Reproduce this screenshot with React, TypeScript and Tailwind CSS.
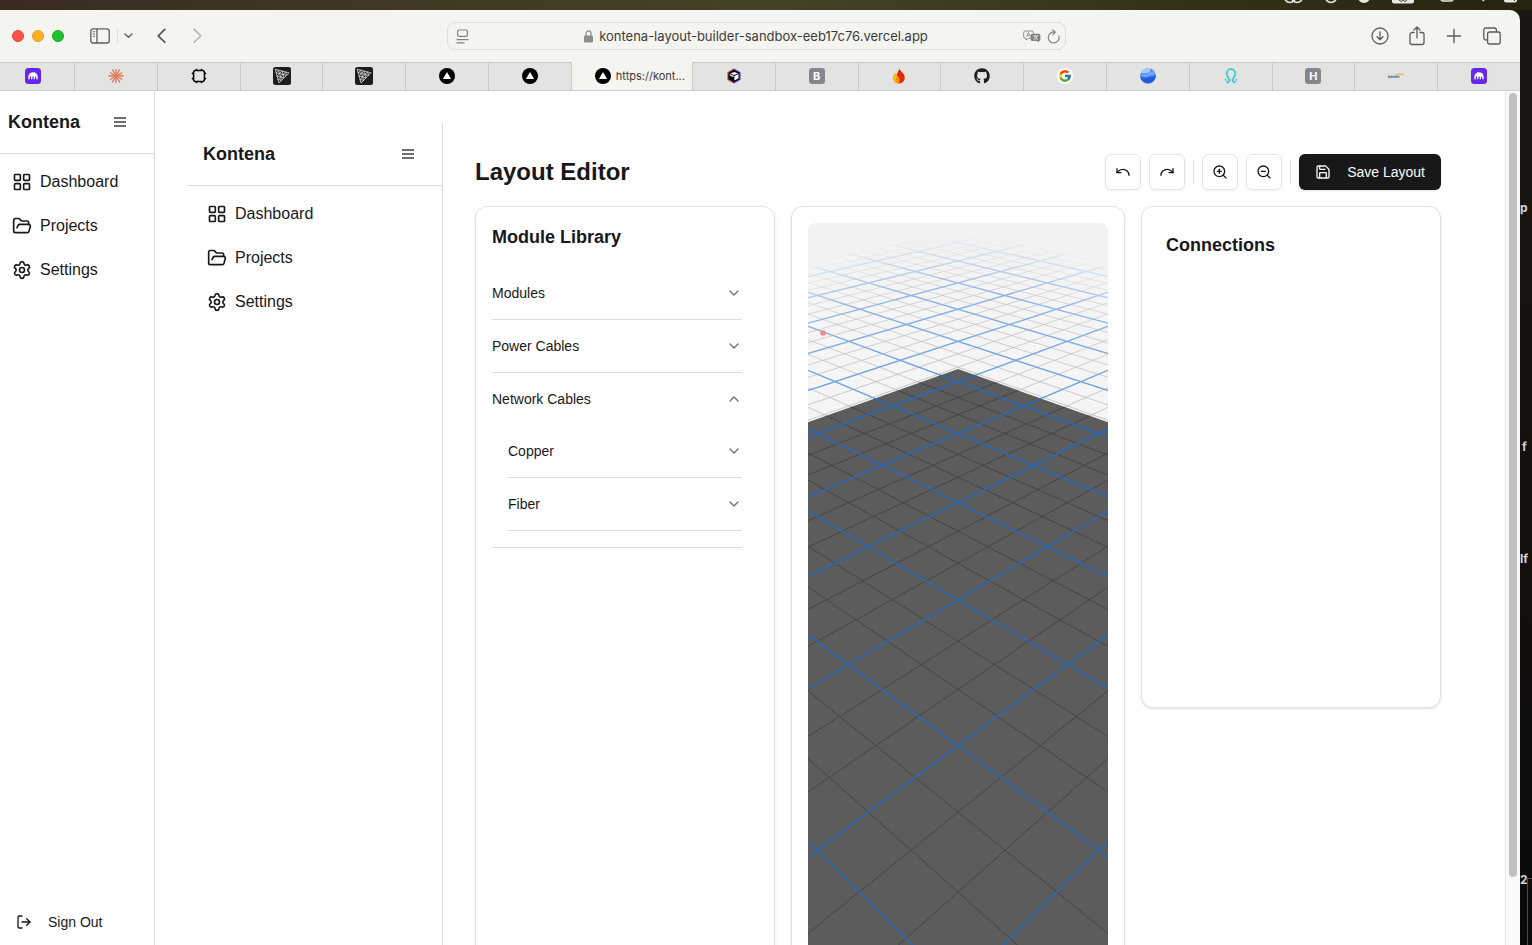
import React, { useState } from "react";
import {
  ChevronDown,
  FolderOpen,
  LayoutGrid,
  LogOut,
  Redo,
  Save,
  Settings,
  Undo,
  ZoomIn,
  ZoomOut,
} from "lucide-react";
import { FaGithub } from "react-icons/fa";
import { FcGoogle } from "react-icons/fc";

/* ---------- Desktop behind the window ---------- */

function MenuBar() {
  return (
    <div className="h-[10px] overflow-hidden bg-gradient-to-r from-[#3a2d20] via-[#454328] to-[#26240f]">
      <svg className="ml-auto block h-[10px] w-[260px]" viewBox="0 0 260 10" aria-hidden="true">
        <g fill="none" stroke="#e8e8e2" strokeWidth="1.5">
          <circle cx="18" cy="-3" r="5.5" />
          <circle cx="25" cy="-3" r="5.5" />
          <circle cx="59" cy="-3" r="5.5" />
          <rect x="169" y="-6" width="12" height="7" rx="2" />
          <path d="M209 -2l3 3" />
        </g>
        <circle cx="92" cy="-3" r="6" fill="#e8e8e2" />
        <rect x="120" y="-6" width="22" height="9.500" rx="2" fill="#e8e8e2" />
        <path d="M127 0l2 1.500 2-1.500 2 1.500 2-1.500" fill="none" stroke="#26240f" strokeWidth="0.8" />
        <rect x="232" y="-6" width="13" height="8.500" rx="2" fill="#e8e8e2" />
        <path d="M240 -2l3 3" stroke="#26240f" />
      </svg>
    </div>
  );
}

function DesktopEdge() {
  return (
    <div className="relative w-3 shrink-0 overflow-hidden bg-gradient-to-b from-[#1a1712] via-[#15100d] to-[#0a0a0a] font-['Inter',sans-serif] text-xs leading-4 font-bold text-[#d4d4d4]">
      <span className="absolute top-[190px] left-0">p</span>
      <span className="absolute top-[429px] left-0.5">f</span>
      <span className="absolute top-[541px] left-0">lf</span>
      <span className="absolute top-[862px] left-0">2</span>
      <div className="absolute top-[868px] right-0 h-20 w-[5px] border-t border-l border-[#4a4a4a]" />
    </div>
  );
}

/* ---------- Browser toolbar ---------- */

function ToolButton({ label, children, className = "" }: { label: string; children: React.ReactNode; className?: string }) {
  return (
    <button type="button" aria-label={label} className={`flex shrink-0 items-center justify-center ${className}`}>
      {children}
    </button>
  );
}

function Toolbar() {
  return (
    <div className="flex h-[52px] items-center bg-[#f4f4f0] text-[#5c5c5a]">
      <div className="flex w-[447px] shrink-0 items-center pl-3">
        <div className="flex gap-2">
          <button type="button" aria-label="Close" className="size-3 rounded-full border border-[#e0443e] bg-[#fb5149]" />
          <button type="button" aria-label="Minimize" className="size-3 rounded-full border border-[#dfa023] bg-[#fdb022]" />
          <button type="button" aria-label="Zoom" className="size-3 rounded-full border border-[#14a627] bg-[#1cc52f]" />
        </div>
        <ToolButton label="Sidebar" className="ml-[25px] w-[21px]">
          <svg width="20" height="16" viewBox="0 0 20 16" fill="none" stroke="currentColor" strokeWidth="1.3">
            <rect x="0.8" y="0.8" width="18.4" height="14.2" rx="2.2" />
            <path d="M7 1v14" />
            <path d="M2.7 3.7h2.4M2.7 6h2.4M2.7 8.3h2.4" strokeWidth="0.9" />
          </svg>
        </ToolButton>
        <div className="ml-[7px] h-4 w-px bg-[#e2e2de]" />
        <ToolButton label="Tab groups" className="ml-1.5 w-[9px]">
          <svg width="9" height="6" viewBox="0 0 9 6" fill="none" stroke="currentColor" strokeWidth="1.4" strokeLinecap="round" strokeLinejoin="round">
            <path d="M1 1l3.5 3.2L8 1" />
          </svg>
        </ToolButton>
        <ToolButton label="Back" className="ml-6 w-[9px]">
          <svg width="9" height="16" viewBox="0 0 9 16" fill="none" stroke="currentColor" strokeWidth="1.8" strokeLinecap="round" strokeLinejoin="round">
            <path d="M7.8 1.4L1.2 7.8l6.6 6.4" />
          </svg>
        </ToolButton>
        <ToolButton label="Forward" className="ml-[27px] w-[9px] text-[#b3b3b0]">
          <svg width="9" height="16" viewBox="0 0 9 16" fill="none" stroke="currentColor" strokeWidth="1.6" strokeLinecap="round" strokeLinejoin="round">
            <path d="M1.2 1.4l6.6 6.4-6.6 6.4" />
          </svg>
        </ToolButton>
      </div>
      <div className="flex h-7 min-w-0 flex-1 items-center rounded-lg border border-[#dededa] pr-[5px] pl-2">
        <svg width="13" height="15" viewBox="0 0 13 15" fill="none" stroke="#82827f" strokeWidth="1.2" aria-hidden="true">
          <rect x="1.6" y="1" width="9.8" height="6.4" rx="1.4" />
          <path d="M0.5 10.6h12M0.5 13.8h8" />
        </svg>
        <div className="flex min-w-0 flex-1 items-center justify-center gap-1.5 pl-5">
          <svg width="9" height="13" viewBox="0 0 9 13" aria-hidden="true">
            <rect x="0" y="5.4" width="9" height="7.2" rx="1.3" fill="#8c8c89" />
            <path d="M2 6V3.4a2.5 2.5 0 0 1 5 0V6" fill="none" stroke="#8c8c89" strokeWidth="1.3" />
          </svg>
          <span className="truncate font-['Inter','Liberation_Sans',sans-serif] text-[13px] leading-4 text-[#3c3c3a]">
            kontena-layout-builder-sandbox-eeb17c76.vercel.app
          </span>
        </div>
        <ToolButton label="Translate" className="mr-1.5">
          <svg width="18" height="13" viewBox="0 0 18 13" aria-hidden="true">
            <path d="M2.2 1h6.6a1.5 1.5 0 0 1 1.5 1.5v4.4a1.5 1.5 0 0 1-1.5 1.5H5.2L3 10V8.4H2.2A1.5 1.5 0 0 1 .7 6.9V2.5A1.5 1.5 0 0 1 2.2 1z" fill="none" stroke="#8c8c89" strokeWidth="1" />
            <path d="M3.6 6.8l1.9-4.3 1.9 4.3M4.3 5.4h2.4" fill="none" stroke="#8c8c89" strokeWidth="0.9" />
            <path d="M9.3 3.8h6.5a1.6 1.6 0 0 1 1.6 1.6v4a1.6 1.6 0 0 1-1.6 1.6v1.6L13.6 11H9.3a1.6 1.6 0 0 1-1.6-1.6v-4a1.6 1.6 0 0 1 1.6-1.6z" fill="#82827f" />
            <path d="M10.2 6h5M12.7 5v1M14.2 6c-.5 1.8-2 3-3.6 3.6M11.2 6.5c.7 1.4 2 2.5 3.6 3.1" fill="none" stroke="#f4f4f0" strokeWidth="0.8" />
          </svg>
        </ToolButton>
        <ToolButton label="Reload">
          <svg width="13" height="15" viewBox="0 0 13 15" fill="none" stroke="#82827f" strokeWidth="1.2" strokeLinecap="round" strokeLinejoin="round">
            <path d="M11.9 7.200A5.400 5.400 0 1 1 7.800 3.300" />
            <path d="M5.800 1l2.400 2.300-2.200 2.400" />
          </svg>
        </ToolButton>
      </div>
      <div className="flex w-[454px] shrink-0 items-center justify-end gap-[19px] pr-[18px]">
        <ToolButton label="Downloads">
          <svg width="18" height="18" viewBox="0 0 18 18" fill="none" stroke="currentColor" strokeWidth="1.3" strokeLinecap="round" strokeLinejoin="round">
            <circle cx="9" cy="9" r="8" />
            <path d="M9 5v7.6M6 9.8l3 3 3-3" />
          </svg>
        </ToolButton>
        <ToolButton label="Share">
          <svg width="18" height="20" viewBox="0 0 18 20" fill="none" stroke="currentColor" strokeWidth="1.3" strokeLinecap="round" strokeLinejoin="round">
            <path d="M6 6.5H4A2 2 0 0 0 2 8.5v8a2 2 0 0 0 2 2h10a2 2 0 0 0 2-2v-8a2 2 0 0 0-2-2h-2" />
            <path d="M9 12V1.2M6 4l3-3 3 3" />
          </svg>
        </ToolButton>
        <ToolButton label="New tab">
          <svg width="18" height="18" viewBox="0 0 18 18" fill="none" stroke="currentColor" strokeWidth="1.4" strokeLinecap="round">
            <path d="M9 2.5v13M2.5 9h13" />
          </svg>
        </ToolButton>
        <ToolButton label="Tab overview">
          <svg width="20" height="18" viewBox="0 0 20 18" fill="none" stroke="currentColor" strokeWidth="1.3" strokeLinejoin="round">
            <rect x="5.6" y="5" width="12.6" height="12" rx="2" />
            <path d="M5.6 13H3.8a2 2 0 0 1-2-2V3a2 2 0 0 1 2-2h8.6a2 2 0 0 1 2 2v2" />
          </svg>
        </ToolButton>
      </div>
    </div>
  );
}

/* ---------- Tabs ---------- */

function JellyIcon() {
  return (
    <svg width="16" height="16" viewBox="0 0 16 16">
      <rect width="16" height="16" rx="3.5" fill="#6527ea" />
      <path
        d="M3.3 10.7V8.9a4.7 4.7 0 0 1 9.4 0v1.8a.7.7 0 0 1-1.4 0V9a.6.6 0 0 0-1.25 0v1.7a.7.7 0 0 1-1.35 0V9a.6.6 0 0 0-1.3 0v1.7a.7.7 0 0 1-1.35 0V9a.6.6 0 0 0-1.3 0v1.7a.7.7 0 0 1-1.45 0z"
        fill="#fff"
      />
    </svg>
  );
}

function BurstIcon() {
  const rays = [0, 30, 62, 88, 118, 150, 182, 210, 238, 272, 300, 332];
  return (
    <svg width="16" height="16" viewBox="0 0 16 16">
      {rays.map((a, i) => (
        <path key={a} d={i % 2 ? "M8 8V.9" : "M8 8V1.4"} stroke="#dd7a5c" strokeWidth="1.3" strokeLinecap="round" transform={`rotate(${a} 8 8)`} />
      ))}
    </svg>
  );
}

function ChipIcon() {
  return (
    <svg width="16" height="16" viewBox="0 0 16 16" fill="none" stroke="#0a0a0a">
      <rect x="2.6" y="2.6" width="10.8" height="10.8" rx="2" strokeWidth="1.5" />
      <g fill="#0a0a0a" stroke="none">
        <path d="M3.600 2.600l1.800-2.200 1.900 2.200zM8.700 2.600l1.900-2.200 1.800 2.200z" />
        <path d="M3.600 13.400l1.800 2.200 1.900-2.200zM8.700 13.400l1.900 2.200 1.800-2.200z" />
        <path d="M2.600 3.600L.4 5.400l2.200 1.900zM2.600 8.700L.4 10.600l2.200 1.800z" />
        <path d="M13.400 3.600l2.200 1.800-2.200 1.900zM13.400 8.700l2.200 1.900-2.200 1.800z" />
      </g>
    </svg>
  );
}

function MeshIcon() {
  return (
    <svg width="18" height="18" viewBox="0 0 18 18">
      <rect width="18" height="18" rx="2.5" fill="#1c1d1f" />
      <g fill="none" stroke="#e4e4e4" strokeWidth="0.75" strokeLinejoin="round">
        <path d="M2.2 2.2L16 5.8 6 16z" />
        <path d="M9.1 4L11 11 4.1 9.1z" />
        <path d="M5.6 3.1l1 3.4-3.4-.9zM12.6 4.9l.9 3.5-3.5-.9zM5.1 12.5l3.5.9-1-3.4z" />
        <path d="M6.6 6.5L10 7.5l-2.4 2.5z" />
      </g>
    </svg>
  );
}

function TriangleIcon() {
  return (
    <svg width="16" height="16" viewBox="0 0 16 16">
      <circle cx="8" cy="8" r="8" fill="#000" />
      <path d="M8 4l4.1 6.9H3.9z" fill="#fff" />
    </svg>
  );
}

function CubeIcon() {
  return (
    <svg width="16" height="16" viewBox="0 0 16 16">
      <path d="M8 1L2 4.500v7L8 15" fill="none" stroke="#e8323c" strokeWidth="1.200" />
      <path d="M8 1l6 3.500v7L8 15" fill="none" stroke="#5a49e0" strokeWidth="1.200" />
      <path d="M8 1.400l5.700 3.300v6.600L8 14.600l-5.700-3.300V4.700z" fill="#0a0a0a" />
      <path d="M4.400 5.500L8.300 3.900l3.700 1.500-4.200 1.700z" fill="#fff" />
      <path d="M12.500 6v4.200l-4.100 2.400V7.900z" fill="#fff" />
      <path d="M3.900 6.200l3.600 1.500v1.600L3.900 7.600z" fill="#fff" />
    </svg>
  );
}

function LetterIcon({ letter }: { letter: string }) {
  return (
    <span className="flex size-4 items-center justify-center rounded-[3px] bg-[#85858f] font-['Inter',sans-serif] text-[11px] leading-4 font-bold text-white">
      {letter}
    </span>
  );
}

function FlameIcon() {
  return (
    <svg width="16" height="16" viewBox="0 0 16 16">
      <path d="M8.3.7c.6 2.3 5.5 4.5 5.500 9a5.700 5.700 0 0 1-5.900 5.700C4.800 15.400 2.200 13 2.200 9.900 2.200 8 3.200 6.300 4.400 5.400l1.400 1.700C6.300 4.600 7.600 3 8.300.7z" fill="#dd2c00" />
      <path d="M4.4 5.4l1.4 1.7 2.100 8.300C4.800 15.400 2.200 13 2.200 9.900 2.200 8 3.200 6.300 4.400 5.400z" fill="#ffc400" />
      <path d="M5.8 7.1c2.300 1.800 3.500 4.800 2.100 8.300-1.500-.1-3.400-1-3.300-3.500.1-1.800.9-3 1.200-4.800z" fill="#ff9100" />
    </svg>
  );
}

function GlobeIcon() {
  return (
    <svg width="16" height="16" viewBox="0 0 16 16">
      <circle cx="8" cy="8" r="7.8" fill="#3f7ff0" />
      <path d="M.6 5.5A7.8 7.8 0 0 1 8 .2c2.500 0 3.500 1.500 2 3.300-2 2.300-6.500 1.500-9.400 2z" fill="#a9cbfb" />
      <path d="M15.700 7c-3 3.500-6 1.500-8.500 2.800C5 11 2.500 10 .3 8.700a7.800 7.800 0 0 0 15.400-.7z" fill="#2257d6" />
      <path d="M15.200 5.400c-2.200 2.800-5 1.800-7.700 3.100C5.500 9.500 2 8 .4 7c2.300-1.500 5.100.2 7.200-1.700C9.200 4 11.500 4.400 13 2.300a8 8 0 0 1 2.200 3.100z" fill="#6ea6f8" />
    </svg>
  );
}

function LoopIcon() {
  return (
    <svg width="16" height="16" viewBox="0 0 16 16" fill="none" stroke="#3accd0" strokeWidth="1.8" strokeLinecap="round">
      <path d="M6.400 11.700C5 9.200 3.700 7.500 3.700 5.300A4.300 4.300 0 0 1 8 1.200a4.300 4.300 0 0 1 4.300 4.100c0 2.200-1.300 3.900-2.700 6.400" />
      <path d="M6.400 11.700c.4 1.600-1 2.900-2.500 2.400M9.600 11.700c-.4 1.600 1 2.900 2.500 2.400M2.600 11.700l.2.200M13.400 11.700l-.2.200" />
    </svg>
  );
}

function SwooshIcon() {
  return (
    <svg width="16" height="6" viewBox="0 0 16 6" fill="none">
      <path d="M0 3.800h11.500" stroke="#5a7fb0" strokeWidth="2" strokeDasharray="2.200 .4" />
      <path d="M7 2.200C10 .8 13 .8 16 1.500" stroke="#e3b04b" strokeWidth="1.2" />
    </svg>
  );
}

const tabs: { name: string; icon: React.ReactNode; active?: boolean }[] = [
  { name: "Kraken", icon: <JellyIcon /> },
  { name: "Claude", icon: <BurstIcon /> },
  { name: "Chip", icon: <ChipIcon /> },
  { name: "three.js docs", icon: <MeshIcon /> },
  { name: "three.js examples", icon: <MeshIcon /> },
  { name: "Vercel dashboard", icon: <TriangleIcon /> },
  { name: "Vercel project", icon: <TriangleIcon /> },
  { name: "https://kont...", icon: <TriangleIcon />, active: true },
  { name: "Cube", icon: <CubeIcon /> },
  { name: "Tab B", icon: <LetterIcon letter="B" /> },
  { name: "Firebase", icon: <FlameIcon /> },
  { name: "GitHub", icon: <FaGithub size={16} color="#1b1f24" /> },
  {
    name: "Google",
    icon: (
      <span className="flex size-4 items-center justify-center rounded-full bg-white">
        <FcGoogle size={14} />
      </span>
    ),
  },
  { name: "Earth", icon: <GlobeIcon /> },
  { name: "Loop", icon: <LoopIcon /> },
  { name: "Tab H", icon: <LetterIcon letter="H" /> },
  { name: "Swoosh", icon: <SwooshIcon /> },
  { name: "Kraken account", icon: <JellyIcon /> },
];

function TabStrip() {
  return (
    <div className="flex h-[29px] border-b border-[#cfcfcc] bg-[#e3e3e1]">
      {tabs.map((tab, i) =>
        tab.active ? (
          <button key={tab.name} type="button" className="flex w-[121px] shrink-0 items-center justify-center gap-[5px] border-r border-[#c9c9c6] bg-[#f4f4f0] pl-4">
            {tab.icon}
            <span className="font-['Inter','Liberation_Sans',sans-serif] text-[11px] leading-4 text-[#3c3c3a]">{tab.name}</span>
          </button>
        ) : (
          <button
            key={tab.name}
            type="button"
            aria-label={tab.name}
            className={`flex items-center justify-center border-t border-t-[#c9c9c6] pb-px ${i === tabs.length - 1 ? "" : "border-r border-r-[#c9c9c6]"} ${
              i === 0 ? "w-[75px] shrink-0 pr-2" : "min-w-0 flex-1"
            }`}
          >
            {tab.icon}
          </button>
        ),
      )}
    </div>
  );
}

/* ---------- Application ---------- */

const navItems = [
  { label: "Dashboard", Icon: LayoutGrid },
  { label: "Projects", Icon: FolderOpen },
  { label: "Settings", Icon: Settings },
];

function BarsIcon() {
  return (
    <svg width="16" height="16" viewBox="0 0 24 24" fill="none" stroke="currentColor" strokeWidth="2.2" aria-hidden="true">
      <path d="M3 6h18M3 12h18M3 18h18" />
    </svg>
  );
}

function SidebarNav({ itemPadding }: { itemPadding: string }) {
  return (
    <nav className="flex flex-col gap-1 pt-2">
      {navItems.map(({ label, Icon }) => (
        <a key={label} href="#" className={`flex h-10 items-center gap-2 text-base ${itemPadding}`}>
          <Icon size={20} />
          {label}
        </a>
      ))}
    </nav>
  );
}

function OuterSidebar() {
  return (
    <aside className="flex w-[155px] shrink-0 flex-col border-r border-[#dcdce0]">
      <div className="flex h-[63px] shrink-0 items-center justify-between border-b border-[#dcdce0] pr-[26px] pl-2">
        <span className="text-lg font-bold">Kontena</span>
        <button type="button" aria-label="Toggle sidebar" className="text-[#3f3f46]">
          <BarsIcon />
        </button>
      </div>
      <SidebarNav itemPadding="px-3" />
      <button type="button" className="mt-auto mb-[13px] flex items-center gap-4 px-4 text-sm leading-5">
        <LogOut size={16} />
        Sign Out
      </button>
    </aside>
  );
}

function InnerSidebar() {
  return (
    <aside className="w-64 shrink-0 border-r border-[#dcdce0]">
      <div className="flex h-[63px] items-center justify-between border-b border-[#dcdce0] pr-[26px] pl-4">
        <span className="text-lg font-bold">Kontena</span>
        <button type="button" aria-label="Toggle inner sidebar" className="text-[#3f3f46]">
          <BarsIcon />
        </button>
      </div>
      <SidebarNav itemPadding="px-5" />
    </aside>
  );
}

function IconButton({ label, children }: { label: string; children: React.ReactNode }) {
  return (
    <button
      type="button"
      aria-label={label}
      className="flex size-9 items-center justify-center rounded-md border border-[#e4e4e7] bg-white shadow-xs"
    >
      {children}
    </button>
  );
}

function EditorHeader() {
  return (
    <div className="flex items-center justify-between">
      <h1 className="text-2xl font-bold">Layout Editor</h1>
      <div className="flex items-center gap-2">
        <IconButton label="Undo">
          <Undo size={16} />
        </IconButton>
        <IconButton label="Redo">
          <Redo size={16} />
        </IconButton>
        <div className="h-6 w-px bg-[#e0e0e4]" />
        <IconButton label="Zoom in">
          <ZoomIn size={16} />
        </IconButton>
        <IconButton label="Zoom out">
          <ZoomOut size={16} />
        </IconButton>
        <div className="h-6 w-px bg-[#e0e0e4]" />
        <button type="button" className="flex h-9 items-center gap-4 rounded-md bg-[#18181b] px-4 text-sm text-[#fafafa] shadow-sm">
          <Save size={16} />
          Save Layout
        </button>
      </div>
    </div>
  );
}

function AccordionItem({
  title,
  defaultOpen = false,
  children,
}: {
  title: string;
  defaultOpen?: boolean;
  children?: React.ReactNode;
}) {
  const [open, setOpen] = useState(defaultOpen);
  return (
    <div className="border-b border-[#dcdce0]">
      <button
        type="button"
        aria-expanded={open}
        onClick={() => setOpen(!open)}
        className="flex h-[52px] w-full items-center justify-between text-left text-sm"
      >
        {title}
        <ChevronDown size={16} className={`text-[#71717a] ${open ? "rotate-180" : ""}`} />
      </button>
      {open && children ? <div className="pb-4 pl-4">{children}</div> : null}
    </div>
  );
}

function ModuleLibrary() {
  return (
    <section className="w-[300px] shrink-0 rounded-xl border border-[#e4e4e7] bg-white p-4 shadow-sm">
      <h2 className="mb-4 text-lg leading-7 font-bold">Module Library</h2>
      <div className="mr-4">
        <AccordionItem title="Modules" />
        <AccordionItem title="Power Cables" />
        <AccordionItem title="Network Cables" defaultOpen>
          <AccordionItem title="Copper" />
          <AccordionItem title="Fiber" />
        </AccordionItem>
      </div>
    </section>
  );
}

/* Ground plane projection: n runs along the view axis, u across it. */
const CX = 150;
const HORIZON = -202.5;
const DEPTH = 3.969;
const project = (n: number, u: number) => {
  const w = n + DEPTH;
  return `${(CX + (979 * u) / w).toFixed(1)} ${(HORIZON + 2878 / w).toFixed(1)}`;
};

function gridPath(major: boolean) {
  const parts: string[] = [];
  for (let i = -30; i <= 60; i++) {
    if ((i % 3 === 0) !== major) continue;
    const k = i / 3;
    const near = -1.8;
    const far = 14;
    parts.push(`M${project(near, k - near)}L${project(far, k - far)}`);
    parts.push(`M${project(near, near - k)}L${project(far, far - k)}`);
  }
  return parts.join("");
}

const minorLines = gridPath(false);
const majorLines = gridPath(true);

function SceneView() {
  return (
    <svg
      className="block h-[800px] w-full rounded-lg"
      viewBox="0 0 300 800"
      preserveAspectRatio="xMidYMin slice"
      role="img"
      aria-label="Layout canvas"
    >
      <defs>
        <linearGradient id="ground" x1="0" y1="0" x2="0" y2="200" gradientUnits="userSpaceOnUse">
          <stop offset="0.1" stopColor="#f2f2f2" />
          <stop offset="0.4" stopColor="#f5f5f6" />
        </linearGradient>
        <radialGradient id="fade" cx="150" cy="477" r="464" gradientUnits="userSpaceOnUse">
          <stop offset="0.7" stopColor="#fff" />
          <stop offset="0.88" stopColor="#bbb" />
          <stop offset="1" stopColor="#000" />
        </radialGradient>
        <mask id="distance" maskUnits="userSpaceOnUse" x="0" y="0" width="300" height="800">
          <rect width="300" height="800" fill="url(#fade)" />
        </mask>
        <clipPath id="floor">
          <path d="M150 146L580 299V800H-280V299z" />
        </clipPath>
      </defs>
      <rect x="-300" width="900" height="800" fill="url(#ground)" />
      <g mask="url(#distance)" fill="none">
        <path d={minorLines} stroke="#b4b4b8" strokeWidth="0.7" />
        <path d={majorLines} stroke="#6c9fdd" strokeWidth="1.4" />
      </g>
      <circle cx="15" cy="110" r="2.8" fill="#f08a85" />
      <path d="M150 146L580 299V800H-280V299z" fill="#5c5c5c" />
      <g clipPath="url(#floor)" fill="none">
        <path d={minorLines} stroke="#434343" strokeWidth="0.9" />
        <path d={majorLines} stroke="#3167a9" strokeWidth="1.8" />
      </g>
    </svg>
  );
}

function Page() {
  return (
    <div className="flex min-h-0 flex-1 bg-white font-['Liberation_Sans',Arial,sans-serif] text-[#18181b]">
      <OuterSidebar />
      <main className="flex min-w-0 flex-1 overflow-hidden pt-8 pr-16 pl-8">
        <InnerSidebar />
        <div className="flex min-w-0 flex-1 flex-col gap-4 pt-[31px] pl-8">
          <EditorHeader />
          <div className="flex gap-4">
            <ModuleLibrary />
            <section className="min-w-0 flex-1 rounded-xl border border-[#e4e4e7] bg-white p-4 shadow-sm">
              <SceneView />
            </section>
            <section className="min-h-[502px] w-[300px] shrink-0 self-start rounded-xl border border-[#e4e4e7] bg-white p-6 shadow-sm">
              <h2 className="text-lg leading-7 font-bold">Connections</h2>
            </section>
          </div>
        </div>
      </main>
      <div className="w-[15px] shrink-0 border-l border-[#e6e6e6] bg-[#fafafa] px-[3px] pt-0.5" aria-hidden="true">
        <div className="h-[92%] rounded-full bg-[#c1c1c1]" />
      </div>
    </div>
  );
}

export default function App() {
  return (
    <div className="flex h-screen flex-col overflow-hidden bg-[#1d1a12]">
      <MenuBar />
      <div className="flex min-h-0 flex-1">
        <div className="flex min-w-0 flex-1 flex-col overflow-hidden rounded-tr-[10px]">
          <Toolbar />
          <TabStrip />
          <Page />
        </div>
        <DesktopEdge />
      </div>
    </div>
  );
}
